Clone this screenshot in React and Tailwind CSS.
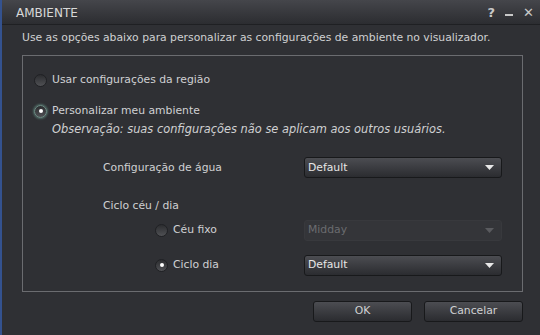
export default function App() {
  return (
    <div
      className="w-[540px] h-[335px] bg-[#2f3034] border-l-2 border-[#34528f] flex flex-col overflow-hidden text-[#cfd0d2]"
      style={{ fontFamily: '"DejaVu Sans", sans-serif' }}
    >
      {/* Barra de título */}
      <div className="h-[25px] shrink-0 flex items-center justify-between pl-[14px] pr-[6px] bg-gradient-to-b from-[#45464b] to-[#2c2d31] border-b border-[#1f2023]">
        <span className="text-[12px] text-[#d8d8d8] mt-[2px]">AMBIENTE</span>
        <div className="flex items-center gap-[10px] text-[#c8c8c8]">
          <span className="text-[13px] font-bold leading-none">?</span>
          <span className="w-[8px] h-[2px] bg-[#c8c8c8] mt-[6px]" />
          <span className="text-[13px] leading-none">✕</span>
        </div>
      </div>

      <div className="flex-1 flex flex-col pl-[20px] pr-[16px]">
        <p className="mt-[6px] text-[10.8px] leading-[14px]">
          Use as opções abaixo para personalizar as configurações de ambiente no visualizador.
        </p>

        {/* Grupo */}
        <div className="mt-[10px] h-[237px] w-[501px] border border-[#6b6c70] flex flex-col pl-[11px] pt-[16px]">
          <Radio label="Usar configurações da região" />
          <div className="mt-[15px]">
            <Radio label="Personalizar meu ambiente" checked focus />
            <p className="ml-[18px] mt-[2px] text-[11.4px] italic">
              Observação: suas configurações não se aplicam aos outros usuários.
            </p>
          </div>

          <div className="ml-[69px] mt-[19px] flex items-center">
            <span className="w-[201px] text-[10.8px]">Configuração de água</span>
            <Dropdown value="Default" />
          </div>

          <span className="ml-[69px] mt-[20px] text-[10.8px]">Ciclo céu / dia</span>

          <div className="ml-[121px] mt-[5px] flex items-center">
            <div className="w-[149px]">
              <Radio label="Céu fixo" />
            </div>
            <Dropdown value="Midday" disabled />
          </div>

          <div className="ml-[121px] mt-[14px] flex items-center">
            <div className="w-[149px]">
              <Radio label="Ciclo dia" checked />
            </div>
            <Dropdown value="Default" />
          </div>
        </div>

        {/* Botões */}
        <div className="mt-[9px] flex justify-end gap-[12px] pr-[1px]">
          <Button label="OK" />
          <Button label="Cancelar" />
        </div>
      </div>
    </div>
  );
}

function Radio({ label, checked, focus }) {
  return (
    <div className="flex items-center gap-[5px]">
      <span
        className={`w-[13px] h-[13px] rounded-full flex items-center justify-center bg-gradient-to-b from-[#2c2d30] to-[#505155] border ${
          focus ? "border-[#6f8f87] shadow-[0_0_2px_1px_#4f6b65]" : "border-[#202124]"
        }`}
      >
        {checked && <span className="w-[4px] h-[4px] rounded-full bg-white" />}
      </span>
      <span className="text-[10.8px] text-[#d0d1d3]">{label}</span>
    </div>
  );
}

function Dropdown({ value, disabled }) {
  return (
    <div
      className={`w-[198px] h-[21px] rounded-[3px] flex items-center justify-between pl-[3px] pr-[7px] ${
        disabled
          ? "bg-[#343539] border border-[#38393d] text-[#6b6c70]"
          : "bg-gradient-to-b from-[#4c4d52] to-[#2b2c30] border border-[#18191b] text-[#e6e6e6]"
      }`}
    >
      <span className="text-[10.8px]">{value}</span>
      <svg width="9" height="5" viewBox="0 0 9 5">
        <path d="M0 0H9L4.5 5Z" fill={disabled ? "#5a5b5f" : "#e8e8e8"} />
      </svg>
    </div>
  );
}

function Button({ label }) {
  return (
    <div className="w-[99px] h-[21px] rounded-[3px] flex items-center justify-center bg-gradient-to-b from-[#4c4d52] to-[#2b2c30] border border-[#18191b] text-[10.8px] text-[#d0d1d3]">
      {label}
    </div>
  );
}
